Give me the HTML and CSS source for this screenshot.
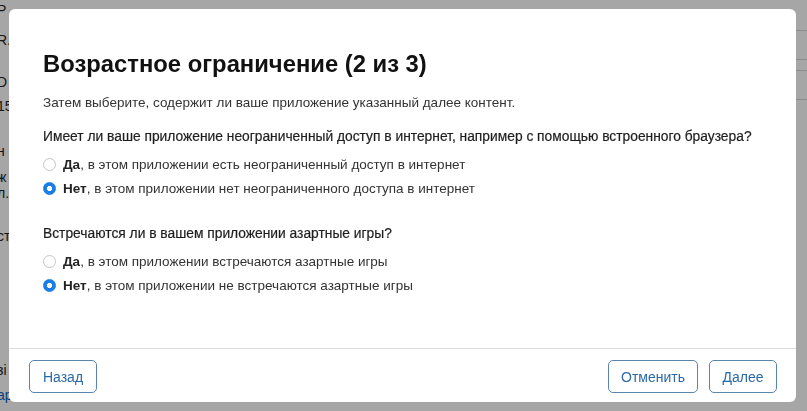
FILE: index.html
```html
<!DOCTYPE html>
<html lang="ru">
<head>
<meta charset="utf-8">
<title>Возрастное ограничение</title>
<link rel="stylesheet" href="styles.css">
</head>
<body>
<div class="page">
  <div class="page-left">
    <div class="pl l1">P</div>
    <div class="pl l2">R.</div>
    <div class="pl l3">D</div>
    <div class="pl l4">15</div>
    <div class="pl l5">н</div>
    <div class="pl l6">ж</div>
    <div class="pl l7">л.</div>
    <div class="pl l8">ст</div>
    <div class="pl l9">зі</div>
    <div class="pl l10 link">ар</div>
  </div>
  <div class="page-right">
    <div class="row r1"></div>
    <div class="row r2"></div>
    <div class="row r3"></div>
    <div class="row r4"></div>
  </div>
</div>
<div class="overlay"></div>
<div class="modal">
  <div class="modal-body">
    <h1 class="title">Возрастное ограничение (2 из 3)</h1>
    <p class="lead">Затем выберите, содержит ли ваше приложение указанный далее контент.</p>
    <div class="question">
      <div class="q-text">Имеет ли ваше приложение неограниченный доступ в интернет, например с помощью встроенного браузера?</div>
      <label class="option"><span class="radio"></span><span class="opt-text"><b>Да</b>, в этом приложении есть неограниченный доступ в интернет</span></label>
      <label class="option"><span class="radio checked"></span><span class="opt-text"><b>Нет</b>, в этом приложении нет неограниченного доступа в интернет</span></label>
    </div>
    <div class="question q2">
      <div class="q-text">Встречаются ли в вашем приложении азартные игры?</div>
      <label class="option"><span class="radio"></span><span class="opt-text"><b>Да</b>, в этом приложении встречаются азартные игры</span></label>
      <label class="option"><span class="radio checked"></span><span class="opt-text"><b>Нет</b>, в этом приложении не встречаются азартные игры</span></label>
    </div>
  </div>
  <div class="modal-footer">
    <button class="btn">Назад</button>
    <div class="spacer"></div>
    <button class="btn">Отменить</button>
    <button class="btn">Далее</button>
  </div>
</div>
</body>
</html>
```
FILE: styles.css
```css
html, body {
  margin: 0;
  padding: 0;
  width: 807px;
  height: 411px;
  overflow: hidden;
  background: #ffffff;
  font-family: "Liberation Sans", Arial, sans-serif;
  color: #1d1d1f;
}

.page {
  display: flex;
  justify-content: space-between;
  height: 411px;
}

.page-left {
  display: flex;
  flex-direction: column;
  font-size: 14px;
  color: #222;
  margin-left: -3px;
}
.pl { height: 14px; line-height: 14px; }
.l1 { margin-top: 3px; }
.l2 { margin-top: 16px; }
.l3 { margin-top: 28px; }
.l4 { margin-top: 10px; }
.l5 { margin-top: 31px; }
.l6 { margin-top: 12px; }
.l7 { margin-top: 2px; }
.l8 { margin-top: 29px; }
.l9 { margin-top: 120px; }
.l10 { margin-top: 11px; }
.link { color: #0a66c2; }

.page-right {
  width: 11px;
  display: flex;
  flex-direction: column;
}
.row { border-bottom: 1px solid #d8d8d8; }
.r1 { height: 30px; }
.r2 { height: 28px; }
.r3 { height: 10px; }
.r4 { height: 28px; }

.overlay {
  position: fixed;
  inset: 0;
  background: rgba(0, 0, 0, 0.35);
}

.modal {
  position: fixed;
  left: 9px;
  top: 9px;
  width: 787px;
  height: 393px;
  background: #ffffff;
  border-radius: 6px;
  display: flex;
  flex-direction: column;
  overflow: hidden;
}

.modal-body {
  flex: 1;
  padding: 40px 34px 0 34px;
}

.title {
  margin: 0;
  font-size: 23.8px;
  line-height: 30px;
  font-weight: 700;
  color: #111;
}

.lead {
  margin: 15px 0 0 0;
  font-size: 13.5px;
  line-height: 18px;
  color: #333;
}

.question {
  margin-top: 16px;
}
.question.q2 { margin-top: 25px; }

.q-text {
  font-size: 13.8px;
  line-height: 18px;
  color: #1e1e1e;
  -webkit-text-stroke: 0.2px #1e1e1e;
  white-space: nowrap;
  margin-bottom: 6px;
}

.option {
  display: flex;
  align-items: center;
  gap: 7px;
  height: 24px;
  font-size: 13.5px;
  color: #333;
}
.option b { color: #222; font-weight: 700; }

.radio {
  width: 11px;
  height: 11px;
  border-radius: 50%;
  border: 1px solid #c6c6c6;
  background: #fff;
  box-sizing: content-box;
  flex: none;
}
.radio.checked {
  border-color: #1a7ee6;
  background: radial-gradient(circle, #fff 0 2.4px, #1a7ee6 2.9px);
}

.modal-footer {
  border-top: 1px solid #dcdcdc;
  display: flex;
  align-items: center;
  gap: 11px;
  padding: 11px 19px 9px 20px;
}
.spacer { flex: 1; }

.btn {
  height: 33px;
  padding: 0 12px;
  border: 1px solid #5a86ad;
  border-radius: 5px;
  background: #fff;
  color: #2a69a8;
  font-family: "Liberation Sans", Arial, sans-serif;
  font-size: 14px;
  min-width: 68px;
}
```
